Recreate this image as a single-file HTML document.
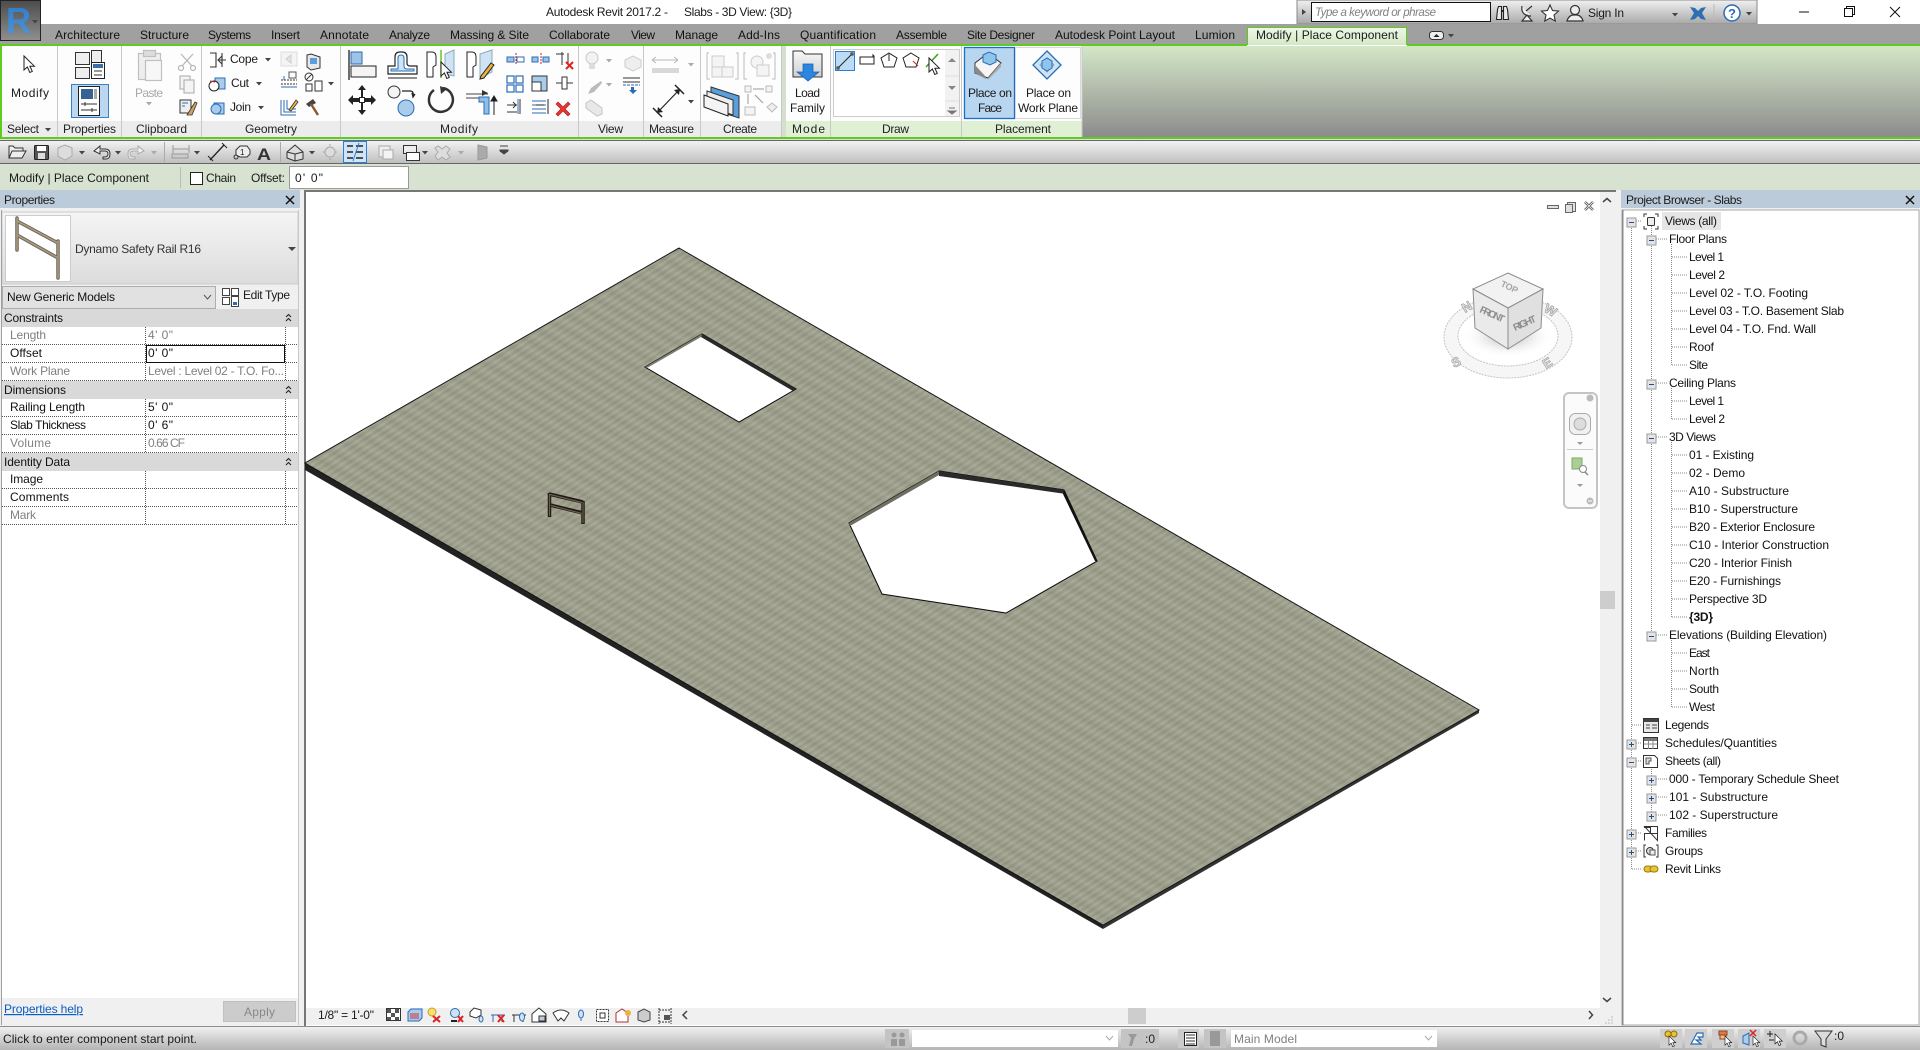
<!DOCTYPE html>
<html><head><meta charset="utf-8"><title>Autodesk Revit 2017.2 - Slabs - 3D View: {3D}</title>
<style>
html,body{margin:0;padding:0;width:1920px;height:1050px;overflow:hidden;background:#f0f0f0}
svg{display:block;font-family:"Liberation Sans",sans-serif;font-size:12px;fill:#1a1a1a}
.g{fill:#808080}
.lg{fill:#a8a8a8}
.dot{stroke:#8a8a8a;stroke-dasharray:1 1;fill:none}
.s{fill:none;stroke:#333;stroke-width:1.2}
.sg{fill:none;stroke:#b5b5b5;stroke-width:1.2}
.row{stroke:#555;stroke-dasharray:1 1;fill:none}
</style></head><body>
<svg width="1920" height="1050" viewBox="0 0 1920 1050" xmlns="http://www.w3.org/2000/svg">
<defs>
<linearGradient id="ctx" x1="0" y1="0" x2="0" y2="1"><stop offset="0" stop-color="#d3e7c7"/><stop offset="1" stop-color="#8c8c8c"/></linearGradient>
<linearGradient id="qat" x1="0" y1="0" x2="0" y2="1"><stop offset="0" stop-color="#f4f4f4"/><stop offset="1" stop-color="#bdbdbd"/></linearGradient>
<linearGradient id="st" x1="0" y1="0" x2="0" y2="1"><stop offset="0" stop-color="#f2f2f2"/><stop offset="1" stop-color="#b4b4b4"/></linearGradient>
<linearGradient id="ic" x1="0" y1="0" x2="0" y2="1"><stop offset="0" stop-color="#f0f0f0"/><stop offset="1" stop-color="#a8a8a8"/></linearGradient>
<linearGradient id="fo" x1="0" y1="0" x2="0" y2="1"><stop offset="0" stop-color="#f8f8f8"/><stop offset="1" stop-color="#cfcfcf"/></linearGradient>
<linearGradient id="ts" x1="0" y1="0" x2="0" y2="1"><stop offset="0" stop-color="#f5f5f5"/><stop offset="1" stop-color="#dcdcdc"/></linearGradient>
<linearGradient id="app" x1="0" y1="0" x2="0" y2="1"><stop offset="0" stop-color="#4c4c4c"/><stop offset="1" stop-color="#8f8f8f"/></linearGradient>
<linearGradient id="r" x1="0" y1="0" x2="0" y2="1"><stop offset="0" stop-color="#2f78c4"/><stop offset="1" stop-color="#4a9ade"/></linearGradient>
<linearGradient id="tab" x1="0" y1="0" x2="0" y2="1"><stop offset="0" stop-color="#eef8e6"/><stop offset="1" stop-color="#d3e8c6"/></linearGradient>
<linearGradient id="slab" gradientUnits="userSpaceOnUse" x1="0" y1="0" x2="-6.5" y2="12" spreadMethod="repeat"><stop offset="0" stop-color="#a6a894"/><stop offset=".5" stop-color="#989a86"/><stop offset="1" stop-color="#a6a894"/></linearGradient>
<linearGradient id="slab2" gradientUnits="userSpaceOnUse" x1="0" y1="0" x2="3" y2="4.500" spreadMethod="repeat"><stop offset="0" stop-color="#000" stop-opacity=".07"/><stop offset=".5" stop-color="#fff" stop-opacity=".07"/><stop offset="1" stop-color="#000" stop-opacity=".07"/></linearGradient>
<radialGradient id="shadow"><stop offset="0" stop-color="#aaa"/><stop offset="1" stop-color="#fff" stop-opacity="0"/></radialGradient>
<path id="ar" d="M0 0h6l-3 3.5z" fill="#444"/>
<path id="arg" d="M0 0h6l-3 3.5z" fill="#aaa"/>
<g id="minus"><rect x="-4.5" y="-4.5" width="9" height="9" fill="#e4e4e4" stroke="#9a9a9a"/><path d="M-2.5 0h5" stroke="#2a4a90"/></g>
<g id="plus"><rect x="-4.5" y="-4.5" width="9" height="9" fill="#e4e4e4" stroke="#9a9a9a"/><path d="M-2.5 0h5M0-2.5v5" stroke="#2a4a90"/></g>
<path id="cur" d="M0 0V14L3.4 11 5.8 16.5 8.3 15.4 5.9 10.2H10.4Z" fill="#fff" stroke="#222"/>
</defs>

<!-- background / title -->
<rect width="1920" height="1050" fill="#f0f0f0"/>
<rect width="1920" height="24" fill="#fff"/>
<text x="546" y="16" textLength="122">Autodesk Revit 2017.2 -</text>
<text x="684" y="16" textLength="108">Slabs - 3D View: {3D}</text>

<!-- infocenter -->
<rect x="1297" y="0" width="460" height="24" fill="url(#ic)" stroke="#8a8a8a"/>
<path d="M1302 9l4 3-4 3z" fill="#444"/>
<rect x="1311.500" y="2.500" width="179" height="19" fill="#fff" stroke="#111"/>
<text x="1315" y="16" textLength="121" font-style="italic" class="g" font-size="11.500">Type a keyword or phrase</text>
<g stroke="#222" fill="#e8e8e8" stroke-width="1.100"><path d="M1496.500 19.500l1-10 1-3h3v13zM1503.500 19.500v-13h3l1 3 1 10z"/><path d="M1501.500 11h2" stroke-width="2"/></g>
<g class="s"><path d="M1522 6c-1 6 2 10 9 10M1526 11l6-5M1522 21h10l-5-6z" fill="#eee"/></g>
<path d="M1550 5l2.500 5.500 6 .6-4.500 4 1.300 6-5.300-3-5.300 3 1.300-6-4.500-4 6-.6z" fill="#fff" stroke="#333" stroke-width="1.100"/>
<g class="s"><circle cx="1575" cy="10" r="4.500" fill="#eee"/><path d="M1567 21c1-4 4-6 6-6h4c2 0 5 2 6 6z" fill="#eee"/></g>
<text x="1588" y="17" textLength="36">Sign In</text>
<use href="#ar" x="1672" y="13"/>
<path d="M1690 7l5 1 3 3 3-3 5-1-4 6 4 7-5-1-3-3-3 3-5 1 4-7z" fill="#2d6fb0"/>
<path d="M1714 4v18" stroke="#bbb"/>
<circle cx="1732" cy="13" r="8" fill="#fff" stroke="#2a6db5" stroke-width="1.500"/>
<text x="1728" y="18" font-weight="bold" font-size="13" fill="#2a6db5">?</text>
<use href="#ar" x="1746" y="12"/>
<!-- window controls -->
<path d="M1799 12h10" stroke="#111"/>
<rect x="1844.500" y="8.500" width="8" height="8" fill="#fff" stroke="#111"/><path d="M1846.500 8.500v-2h8v8h-2" fill="none" stroke="#111"/>
<path d="M1890 7l10 10M1900 7l-10 10" stroke="#111"/>

<!-- tabs -->
<rect y="24" width="1920" height="21" fill="#a0a0a0"/>
<g fill="#111">
<text x="55" y="39" textLength="65">Architecture</text>
<text x="140" y="39" textLength="49">Structure</text>
<text x="208" y="39" textLength="43">Systems</text>
<text x="271" y="39" textLength="29">Insert</text>
<text x="320" y="39" textLength="49">Annotate</text>
<text x="389" y="39" textLength="41">Analyze</text>
<text x="450" y="39" textLength="79">Massing &amp; Site</text>
<text x="549" y="39" textLength="61">Collaborate</text>
<text x="631" y="39" textLength="24">View</text>
<text x="675" y="39" textLength="43">Manage</text>
<text x="738" y="39" textLength="42">Add-Ins</text>
<text x="800" y="39" textLength="76">Quantification</text>
<text x="896" y="39" textLength="51">Assemble</text>
<text x="967" y="39" textLength="68">Site Designer</text>
<text x="1055" y="39" textLength="120">Autodesk Point Layout</text>
<text x="1195" y="39" textLength="40">Lumion</text>
</g>
<path d="M1247.500 45V27.500h159V45" fill="url(#tab)" stroke="#5ecb1e"/>
<text x="1256" y="39" textLength="142">Modify | Place Component</text>
<rect x="1429.500" y="31.500" width="14" height="8" rx="3" fill="#eee" stroke="#333"/><path d="M1433.500 37l3-3 3 3z" fill="#222"/>
<use href="#ar" x="1448" y="34" fill="#222"/>

<!-- app button -->
<rect x=".5" y=".5" width="40" height="40" fill="url(#app)" stroke="#222"/>
<text x="6" y="33" font-size="36" font-weight="bold" fill="url(#r)" textLength="25" lengthAdjust="spacingAndGlyphs">R</text>
<use href="#ar" x="32" y="20" fill="#222"/>

<!-- ribbon -->
<rect y="45" width="1920" height="94" fill="#fdfdfd"/>
<rect x="1082" y="46" width="838" height="91" fill="url(#ctx)"/>
<rect x="782" y="46" width="4" height="91" fill="#d4dfcd"/>
<rect y="44" width="1247" height="2" fill="#5ecb1e"/><rect x="1407" y="44" width="513" height="2" fill="#5ecb1e"/>
<rect y="137" width="1920" height="2" fill="#5ecb1e"/>
<rect y="45" width="2" height="93" fill="#5ecb1e"/>
<!-- panel title bars -->
<rect x="2" y="121" width="780" height="16" fill="#ececec"/>
<rect x="786" y="121" width="296" height="16" fill="#dff0d5"/>
<g stroke="#c8c8c8"><path d="M57.500 46V137M121.500 46V137M201.500 46V137M340.500 46V137M578.500 46V137M643.500 46V137M700.500 46V137M781.500 46V137M830.500 46V137M961.500 46V137M1082 46V137"/></g>
<g fill="#222">
<text x="7" y="133" textLength="32">Select</text><use href="#ar" x="45" y="128"/>
<text x="63" y="133" textLength="53">Properties</text>
<text x="136" y="133" textLength="51">Clipboard</text>
<text x="245" y="133" textLength="52">Geometry</text>
<text x="440" y="133" textLength="38">Modify</text>
<text x="598" y="133" textLength="25">View</text>
<text x="649" y="133" textLength="45">Measure</text>
<text x="723" y="133" textLength="34">Create</text>
<text x="792" y="133" textLength="33">Mode</text>
<text x="882" y="133" textLength="27">Draw</text>
<text x="995" y="133" textLength="56">Placement</text>
</g>

<!-- Select -->
<use href="#cur" x="24" y="56"/>
<text x="11" y="97" textLength="38">Modify</text>
<!-- Properties -->
<g stroke="#333" fill="#eee"><rect x="75.500" y="52.500" width="14" height="12"/><rect x="91.500" y="50.500" width="10" height="14"/><rect x="75.500" y="67.500" width="14" height="11"/></g>
<rect x="91.500" y="62.500" width="13" height="16" fill="#fff" stroke="#222"/><rect x="93" y="64" width="10" height="4" fill="#3a6ea5"/><path d="M94 71h8M94 75h8" stroke="#333"/>
<rect x="71.500" y="84.500" width="37" height="33" fill="#bcd8f0" stroke="#3a7fc4"/>
<rect x="78.500" y="86.500" width="21" height="29" fill="#fff" stroke="#222"/><rect x="81" y="89" width="12" height="10" fill="#34648f"/><rect x="94" y="89" width="3" height="10" fill="#aaa"/><path d="M81 104h16M85 102v4M81 110h16M92 108v4" stroke="#333"/>
<!-- Clipboard -->
<g class="sg" fill="#eee"><rect x="138.500" y="53.500" width="22" height="26" fill="#eee" stroke="#c0c0c0"/><rect x="143.500" y="50.500" width="12" height="6" fill="#ddd" stroke="#c0c0c0"/><rect x="145.500" y="60.500" width="16" height="20" fill="#f7f7f7" stroke="#c0c0c0"/></g>
<text x="135" y="97" textLength="28" class="lg">Paste</text>
<use href="#arg" x="146" y="102"/>
<g class="sg"><path d="M181 54l11 12M193 54l-11 12"/><circle cx="181" cy="68" r="2.500"/><circle cx="193" cy="68" r="2.500"/></g>
<g class="sg"><rect x="180" y="76" width="10" height="13" fill="#f4f4f4"/><rect x="184" y="80" width="10" height="13" fill="#f4f4f4"/></g>
<rect x="180" y="100" width="11" height="13" fill="#eee" stroke="#333"/><path d="M182 103h6M182 106h3" stroke="#2a6db5"/><path d="M187 115l8-13 2 1-5 12z" fill="#cfa060" stroke="#333" stroke-width=".8"/>
<!-- Geometry -->
<g class="s"><path d="M210 53h6v14h-6M222 53v14M218 60h8M222 56l-4 4 4 4" stroke-width="1.100"/></g>
<text x="230" y="63" textLength="28">Cope</text><use href="#ar" x="265" y="58"/>
<rect x="215" y="78" width="10" height="11" fill="#a9cbec" stroke="#2a6db5"/><circle cx="214" cy="86" r="5" fill="#fff" stroke="#222"/><path d="M210 81l5 1" stroke="#c22" />
<text x="231" y="87" textLength="18">Cut</text><use href="#ar" x="256" y="82"/>
<path d="M214 103h10v11h-7l-3-3z" fill="#a9cbec" stroke="#2a6db5"/><circle cx="216" cy="109" r="5" fill="#a9cbec" stroke="#2a6db5"/>
<text x="230" y="111" textLength="21">Join</text><use href="#ar" x="258" y="106"/>
<rect x="281" y="52" width="16" height="14" fill="#f4f4f4" stroke="#ddd"/><path d="M291 55l-5 4 5 4z" fill="#e4e4e4" stroke="#ccc"/>
<path d="M307 55l4-1 9 3v11l-9 2-4-3z" fill="#e8e8e8" stroke="#333"/><rect x="310" y="58" width="7" height="6" fill="#5a9fdc"/>
<path d="M281 80h16M281 84h16" stroke="#333" stroke-dasharray="2 1"/><path d="M284 76v4" stroke="#2a6db5"/><rect x="289" y="72" width="7" height="6" fill="none" stroke="#555"/><path d="M281 87h16" stroke="#2a6db5"/>
<circle cx="309" cy="77" r="4" fill="none" stroke="#333"/><path d="M306 80l6-6" stroke="#333"/><rect x="306" y="84" width="6" height="7" fill="#fff" stroke="#333"/><rect x="315" y="81" width="7" height="10" fill="#fff" stroke="#333"/><use href="#ar" x="328" y="82"/>
<path d="M281 100v15h15M284 100v12h12M287 100v9h9" stroke="#2a6db5" fill="none"/><path d="M289 110l7-10 2 2-7 9z" fill="#f0b040" stroke="#333" stroke-width=".8"/>
<path d="M306 104l7-5 3 4-7 4z" fill="#444"/><path d="M311 104l7 11" stroke="#8a5a30" stroke-width="2.500"/>
<!-- Modify tools -->
<g stroke="#222"><path d="M349 50v30" stroke-width="1.300"/><rect x="351" y="52" width="11" height="12" fill="#9cc4e8" stroke="#2a6db5"/><rect x="351" y="66" width="25" height="11" fill="#f4f4f4"/></g>
<path d="M388 74v-8h7v-9q0-5 5-5h2q5 0 5 5v6q0 3 3 3h7v8z" fill="#fff" stroke="#222" stroke-width="1.200"/><path d="M391 71v-2h7v-11q0-3 3-3t3 3v8q0 3 3 3h7v2z" fill="#cfe3f5" stroke="#2a6db5"/><path d="M388 78h29" stroke="#222"/>
<path d="M427 52h5q4 0 4 5v8l-3 2v10h-6z" fill="#fff" stroke="#222"/><path d="M441 50v28" stroke="#5ecb1e" stroke-width="1.500"/><path d="M445 54l9-4v26l-9-2z" fill="#cfe3f5" stroke="#8ab"/><use href="#cur" x="441" y="62"/>
<path d="M467 52h5q4 0 4 5v8l-3 2v10h-6z" fill="#fff" stroke="#222"/><path d="M480 54l12-4v22l-12 6z" fill="#cfe3f5" stroke="#8ab"/><path d="M481 76l10-13 3 2-10 13-4 1z" fill="#f0b040" stroke="#222"/>
<g fill="#fff" stroke="#222"><path d="M362 85l-4 5h3v8h-8v-3l-5 5 5 5v-3h8v8h-3l4 5 4-5h-3v-8h8v3l5-5-5-5v3h-8v-8h3z" fill="#222" stroke="none"/><rect x="359.500" y="97.500" width="5" height="5" fill="#fff"/></g>
<circle cx="394" cy="92" r="6" fill="#f4f4f4" stroke="#333"/><circle cx="406" cy="108" r="8" fill="#a9cbec" stroke="#2a6db5"/><path d="M402 91h8q4 0 3 5M412 93l1 4 2-3" fill="none" stroke="#222" stroke-width="1.300"/>
<path d="M443 88a12 12 0 1 1-9 2" fill="none" stroke="#333" stroke-width="2.500"/><path d="M440 86l7 3-6 5z" fill="#333"/>
<path d="M466 94h22M466 98h18" stroke="#444"/><path d="M482 90l6 3-6 3z" fill="#333"/><path d="M484 97h5v17h-5v-12h-5v-5z" fill="#8fbfe8" stroke="#2a6db5"/><path d="M494 115V98M494 96l-3 5h6z" stroke="#222"/>
<g fill="#9cc4e8" stroke="#2a6db5"><rect x="507" y="57" width="7" height="5"/><rect x="517" y="57" width="7" height="5" fill="#fff"/><rect x="532" y="57" width="6" height="5"/><rect x="543" y="57" width="6" height="5"/></g>
<path d="M516 53v12M541 53v12" stroke="#c22" stroke-dasharray="2 1"/>
<path d="M556 54h8M562 52v13M568 53v10" stroke="#333" fill="none"/><path d="M566 62l7 7M573 62l-7 7" stroke="#d22" stroke-width="2"/>
<g fill="#fff" stroke="#2a6db5" stroke-width="1.200"><rect x="507" y="76" width="7" height="7"/><rect x="516" y="76" width="7" height="7"/><rect x="507" y="85" width="7" height="7"/><rect x="516" y="85" width="7" height="7"/></g>
<rect x="532" y="76" width="15" height="15" fill="#a9cbec" stroke="#333"/><rect x="532" y="82" width="9" height="9" fill="#fff" stroke="#333"/>
<path d="M556 83h6M562 77v12h5v-12zM573 83h-6" fill="#fff" stroke="#333"/>
<path d="M507 105h10M513 102l3 3-3 3M507 112h10M520 99v15" fill="none" stroke="#333"/><path d="M518 99v15" stroke="#2a6db5"/>
<path d="M532 101h14M532 105h14M532 109h14M532 113h14" stroke="#2a6db5"/><path d="M548 99v15M536 105h8" stroke="#222"/>
<path d="M558 102l5 5 5-5 2 2-5 5 5 5-2 2-5-5-5 5-2-2 5-5-5-5z" fill="#e33" stroke="#a11" stroke-width=".6"/>
<!-- View -->
<circle cx="592" cy="58" r="6" fill="#f2f2f2" stroke="#c8c8c8"/><rect x="589" y="64" width="6" height="5" fill="#ddd"/><use href="#arg" x="606" y="59"/>
<path d="M625 60l8-4 8 4v7l-8 4-8-4z" fill="#eee" stroke="#ccc"/>
<path d="M588 94l3-6 10-7 1 2-8 9z" fill="#bbb"/><use href="#arg" x="606" y="83"/>
<path d="M623 78h17M623 82h17" stroke="#333"/><path d="M623 85h17" stroke="#2a6db5" stroke-dasharray="3 1"/><path d="M631 87h3v3h3l-4 4-4-4h2z" fill="#2a6db5"/>
<path d="M586 103l5-3 11 8v6l-5 2-11-8z" fill="#e8e8e8" stroke="#c4c4c4"/>
<!-- Measure -->
<path d="M652 60h26M652 60l4-3M652 60l4 3M678 60l-4-3M678 60l-4 3" stroke="#b8b8b8" fill="none"/><rect x="652" y="68" width="27" height="5" fill="#d8d8d8"/>
<use href="#arg" x="688" y="63"/>
<path d="M657 113l23-24" stroke="#222" stroke-width="1.200"/><path d="M653 108l9 9M675 85l9 9" stroke="#222" stroke-width="1.500"/><path d="M657 113l6-1-5-5zM680 89l-6 1 5 5z" fill="#222"/>
<use href="#ar" x="688" y="100"/>
<!-- Create -->
<path d="M709 53h-2v26h3M736 53h2v26h-3" stroke="#bbb" fill="none"/><g fill="#f4f4f4" stroke="#ccc"><rect x="712" y="56" width="12" height="11"/><rect x="712" y="67" width="10" height="10"/><rect x="722" y="67" width="11" height="10"/></g>
<path d="M746 53h-2v26h3M773 53h2v26h-3" stroke="#bbb" fill="none"/><circle cx="757" cy="62" r="6" fill="#f4f4f4" stroke="#ccc"/><rect x="757" y="65" width="12" height="11" fill="#f4f4f4" stroke="#ccc"/><circle cx="769" cy="56" r="3" fill="#ddd"/>
<path d="M711 87l28 9v22l-28-9z" fill="#5a9fdc" stroke="#333"/><path d="M707 91l26 9v15l-26-9z" fill="#eee" stroke="#333"/><path d="M704 95l24 9v12l-24-9z" fill="#f4f4f4" stroke="#222"/>
<g fill="#f4f4f4" stroke="#bbb"><rect x="745" y="86" width="6" height="6"/><rect x="766" y="86" width="6" height="6"/><rect x="745" y="107" width="10" height="8"/></g><path d="M753 89h11M748 94v10M755 95l8 8" stroke="#999"/><path d="M767 107l5-4 5 4-5 5z" fill="#eee" stroke="#bbb"/>
<!-- Mode -->
<path d="M793 77V51h9l3 3h17v23z" fill="url(#fo)" stroke="#333"/><path d="M803 64h10v8h6l-11 9-11-9h6z" fill="#2a86e0" stroke="#1a5fa8" stroke-width=".7"/>
<text x="795" y="97" textLength="25">Load</text><text x="790" y="112" textLength="35">Family</text>
<!-- Draw -->
<rect x="833.500" y="49.500" width="126" height="67" fill="#fff" stroke="#ccc"/>
<rect x="835.500" y="51.500" width="19" height="19" fill="#bcdcf5" stroke="#2a7fd0"/><path d="M838 68l14-14" stroke="#222"/><rect x="837" y="67" width="2" height="2" fill="#fff" stroke="#222"/><rect x="851" y="53" width="2" height="2" fill="#fff" stroke="#222"/>
<path d="M860 57h13v-2l1 1v8h-14z" fill="#fff" stroke="#222"/>
<path d="M889 53l8 5-3 9h-10l-3-9z" fill="#fff" stroke="#222"/><path d="M889 61v-7" stroke="#222"/>
<path d="M911 53l8 5-3 9h-10l-3-9z" fill="#fff" stroke="#222"/><path d="M913 61l5 5" stroke="#d22"/>
<path d="M926 67l12-13" stroke="#3aa020" stroke-width="1.500"/><use href="#cur" x="932" y="58" transform="translate(-3 0)"/>
<rect x="945" y="50" width="14" height="66" fill="#f2f2f2"/><path d="M948 62l4-4 4 4z" fill="#888"/><path d="M948 86l4 4 4-4z" fill="#888"/><path d="M949 108h6M948 111l4 3 4-3z" stroke="#777" fill="#777"/><path d="M945 101h14M945 76h14" stroke="#ddd"/>
<!-- Placement -->
<rect x="964.500" y="47.500" width="50" height="71" fill="#b8d6f0" stroke="#1a6fc4" stroke-width="1.300"/>
<rect x="1015.500" y="47.500" width="65" height="71" fill="#fdfdfd" stroke="#d8d8d8"/>
<path d="M975 73V63l13-10 13 10-13 15z" fill="#f5f5f5" stroke="#333"/><path d="M975 65l11 12v2l-11-6z" fill="#888"/><path d="M1001 63v4l-13 13v-2z" fill="#aaa"/><path d="M983 55l6-3 7 3v7l-6 3-7-3z" fill="#8fc4ec" stroke="#2a6db5"/>
<path d="M1047 51l14 14-14 14-14-14z" fill="#cfe3f5" stroke="#2a6db5" stroke-width="1.300"/><path d="M1040 65l7-7 7 7-7 7z" fill="none" stroke="#7aa8d8"/><path d="M1042 61l5-3 5 3v7l-5 3-5-3z" fill="#8fc4ec" stroke="#2a6db5"/>
<text x="968" y="97" textLength="44">Place on</text><text x="978" y="112" textLength="24">Face</text>
<text x="1026" y="97" textLength="45">Place on</text><text x="1018" y="112" textLength="60">Work Plane</text>

<!-- QAT -->
<rect y="139" width="1920" height="1" fill="#e0e0e0"/>
<rect y="140" width="1920" height="24" fill="url(#qat)"/>
<path d="M0 140.500H1920M0 163.500H1920" stroke="#666"/>
<path d="M9 158v-12h4l2 2h8v3M9 158l3-7h14l-4 7z" fill="#eee" stroke="#333"/>
<rect x="34.500" y="145.500" width="14" height="14" rx="1" fill="#555" stroke="#222"/><rect x="37" y="146" width="9" height="5" fill="#fff"/><rect x="38" y="153" width="7" height="6" fill="#ddd"/>
<path d="M58 148l7-3 7 3v8l-7 4-7-4z" fill="#ddd" stroke="#aaa"/><use href="#ar" x="79" y="151"/>
<path d="M94 151l6-5v3h5q5 0 5 5t-4 5h-3v-2h2q3 0 3-3t-3-3h-5v3z" fill="#eee" stroke="#333"/><use href="#ar" x="115" y="151"/>
<path d="M144 151l-6-5v3h-5q-5 0-5 5t4 5h3v-2h-2q-3 0-3-3t3-3h5v3z" fill="#f2f2f2" stroke="#aaa"/><use href="#arg" x="151" y="151"/>
<path d="M164.500 142v20" stroke="#aaa"/>
<path d="M173 149h16M173 145v8M189 145v8" stroke="#999" fill="none"/><rect x="172" y="154" width="16" height="4" fill="#ccc" stroke="#999"/><use href="#ar" x="194" y="151"/>
<path d="M210 160l14-15" stroke="#222" stroke-width="1.300"/><path d="M208 156l5 5M222 143l5 5" stroke="#222"/>
<circle cx="236" cy="157" r="2" fill="none" stroke="#333"/><path d="M236 155v-5l4-4h7l3 4v4l-3 3h-7z" fill="#eee" stroke="#333"/><text x="240" y="155" font-size="8">1</text>
<text x="257" y="160" font-size="17" font-weight="bold" fill="#333" textLength="14" lengthAdjust="spacingAndGlyphs">A</text>
<path d="M280.500 142v20" stroke="#aaa"/>
<path d="M287 152l8-7 8 7v7l-8 2-8-3z" fill="#ddd" stroke="#333"/><path d="M295 154v7M287 152l8 2 8-2" stroke="#333" fill="none"/><use href="#ar" x="309" y="151"/>
<path d="M325 152a5 5 0 0 1 10 0 5 5 0 0 1-10 0z" fill="#ddd" stroke="#aaa"/><path d="M323 152h2M335 152h2M330 146v-2M330 158v2" stroke="#aaa"/>
<rect x="343.500" y="141.500" width="23" height="21" fill="#cfe4f7" stroke="#2a7fd0"/><path d="M347 146h6M347 152h6M347 158h6M356 146h7M356 152h7M356 158h7" stroke="#222" stroke-width="1.500"/><path d="M353 161l6-18" stroke="#2a7fd0"/>
<rect x="379" y="146" width="11" height="11" fill="#eee" stroke="#aaa"/><rect x="383" y="150" width="10" height="9" fill="#f4f4f4" stroke="#aaa"/>
<rect x="403.500" y="145.500" width="13" height="8" fill="#eee" stroke="#333"/><rect x="406.500" y="152.500" width="13" height="8" fill="#fff" stroke="#333"/><use href="#ar" x="422" y="151"/>
<path d="M438 146l4 3 4-3 4 3-3 4 3 4-4 3-4-3-4 3-3-4 3-4-3-4z" fill="#ddd" stroke="#aaa"/><use href="#arg" x="458" y="151"/>
<path d="M478 145l9 2v11l-9 2z" fill="#aaa" stroke="#999"/>
<path d="M500 146h8M500 150h8v1l-4 3-4-3z" stroke="#444" fill="#444"/>

<!-- Options bar -->
<rect y="164" width="1920" height="26" fill="#d8e2d1"/>
<text x="9" y="182" textLength="140">Modify | Place Component</text>
<path d="M180.500 167v21" stroke="#bbb"/>
<rect x="190.500" y="172.500" width="12" height="12" fill="#fff" stroke="#222"/>
<text x="206" y="182" textLength="30">Chain</text>
<text x="251" y="182" textLength="34">Offset:</text>
<rect x="289.500" y="166.500" width="119" height="22" fill="#fff" stroke="#9a9a9a"/>
<text x="295" y="182" textLength="28">0'  0"</text>

<!-- Panels -->
<rect y="190" width="1920" height="836" fill="#f0f0f0"/>
<rect y="190" width="300" height="18" fill="#bccbd9"/>
<text x="4" y="204" textLength="51">Properties</text>
<path d="M286 196l8 8M294 196l-8 8" stroke="#111" stroke-width="1.500"/>
<rect x="1" y="210" width="297" height="815" fill="#f0f0f0"/>
<rect x="2" y="212" width="296" height="72" fill="url(#ts)" stroke="#ccc"/>
<rect x="5.500" y="215.500" width="65" height="66" fill="#fff" stroke="#ccc"/>
<g fill="none" stroke-linecap="round"><g stroke="#6f6353" stroke-width="3.500"><path d="M17 218v32M58 241v37M17 221l41 22M17 235l41 23"/></g><g stroke="#a89a82" stroke-width="1.600"><path d="M17 218v32M58 241v37M17 221l41 22M17 235l41 23"/></g></g>
<text x="75" y="253" textLength="126" fill="#333">Dynamo Safety Rail R16</text>
<path d="M288 247h8l-4 4z" fill="#444"/>
<rect x="2.500" y="286.500" width="213" height="22" fill="#e1e1e1" stroke="#adadad"/>
<text x="7" y="301" textLength="108" fill="#111">New Generic Models</text>
<path d="M204 295l3.500 4 3.500-4" fill="none" stroke="#555"/>
<g stroke="#444" fill="#fff"><rect x="222.500" y="288.500" width="7" height="7"/><rect x="231.500" y="288.500" width="7" height="7"/><rect x="222.500" y="297.500" width="7" height="7"/><rect x="231.500" y="296.500" width="7" height="10"/></g>
<rect x="233" y="302" width="4" height="3" fill="#2a6db5"/>
<text x="243" y="299" textLength="47">Edit Type</text>
<!-- table -->
<rect x="2" y="309" width="296" height="216" fill="#fff"/>
<g fill="#d9d9d9"><rect x="2" y="309" width="296" height="18"/><rect x="2" y="381" width="296" height="18"/><rect x="2" y="453" width="296" height="18"/></g>
<g class="row"><path d="M2 344.500H298M2 362.500H298M2 380.500H298M2 416.500H298M2 434.500H298M2 452.500H298M2 488.500H298M2 506.500H298M2 524.500H298"/><path d="M145.500 327V381M145.500 399V453M145.500 471V525M285.500 327V381M285.500 399V453M285.500 471V525"/></g>
<rect x="146.500" y="345.500" width="138" height="17" fill="#fff" stroke="#111" stroke-width="1"/>
<g fill="#111">
<text x="4" y="322" textLength="59">Constraints</text>
<text x="4" y="394" textLength="62">Dimensions</text>
<text x="4" y="466" textLength="66">Identity Data</text>
<text x="10" y="357" textLength="32">Offset</text>
<text x="148" y="357" textLength="25">0'  0"</text>
<text x="10" y="411" textLength="75">Railing Length</text>
<text x="148" y="411" textLength="25">5'  0"</text>
<text x="10" y="429" textLength="76">Slab Thickness</text>
<text x="148" y="429" textLength="25">0'  6"</text>
<text x="10" y="483" textLength="33">Image</text>
<text x="10" y="501" textLength="59">Comments</text>
</g>
<g fill="#808080">
<text x="10" y="339" textLength="36">Length</text>
<text x="148" y="339" textLength="25">4'  0"</text>
<text x="10" y="375" textLength="60">Work Plane</text>
<text x="148" y="375" textLength="136">Level : Level 02 - T.O. Fo...</text>
<text x="10" y="447" textLength="41">Volume</text>
<text x="148" y="447" textLength="37">0.66 CF</text>
<text x="10" y="519" textLength="26">Mark</text>
</g>
<g fill="none" stroke="#222" stroke-width="1.100"><path d="M286 317l2.500-2.500 2.500 2.500M286 321l2.500-2.500 2.500 2.500M286 389l2.500-2.500 2.500 2.500M286 393l2.500-2.500 2.500 2.500M286 461l2.500-2.500 2.500 2.500M286 465l2.500-2.500 2.500 2.500"/></g>
<rect x="2" y="525" width="296" height="473" fill="#fff"/>
<path d="M1.500 210V1025" stroke="#a0a0a0"/><path d="M298.500 210V1025" stroke="#c8c8c8"/>
<text x="4" y="1013" textLength="79" fill="#0a5cc4" text-decoration="underline">Properties help</text>
<rect x="223.500" y="1001.500" width="72" height="20" fill="#cccccc" stroke="#c0c0c0"/>
<text x="244" y="1016" textLength="31" fill="#888">Apply</text>

<!-- Viewport -->
<rect x="304" y="190" width="1312" height="836" fill="#fff"/>
<rect x="304" y="190" width="1312" height="2" fill="#777"/>
<rect x="304" y="190" width="2" height="836" fill="#777"/>
<!-- slab -->
<path d="M305 463L305 470 1103 929 1103 925Z" fill="#222"/>
<path d="M1103 925L1103 929 1479 713 1479 710Z" fill="#333"/>
<path d="M679 248L1479 710 1103 925 305 463Z M702 334L645 367 739 422 796 389Z M939 471L849 523 882 594 1006 613 1097 561 1064 490Z" fill="url(#slab)" fill-rule="evenodd" stroke="#111" stroke-width="1"/>
<path d="M679 248L1479 710 1103 925 305 463Z" fill="url(#slab2)"/>
<path d="M702 334L645 367 739 422 796 389Z" fill="#fff" stroke="#111"/>
<path d="M939 471L849 523 882 594 1006 613 1097 561 1064 490Z" fill="#fff" stroke="#111"/>
<path d="M702 334L796 389 793 391 701 337Z" fill="#2a2a2a"/>
<path d="M702 334L645 367 647 368 701 337Z" fill="#7d7d70"/>
<path d="M939 471L1064 490 1066 494 939 476Z" fill="#2a2a2a"/>
<path d="M1064 490L1097 561 1095 561 1063 494Z" fill="#111"/>
<path d="M939 471L849 523 850 526 939 475Z" fill="#6f6f62"/>
<!-- rail -->
<g fill="none" stroke-width="3.500" stroke="#1f1a16"><path d="M549.500 493v24M583 501v23M549 494l34 8M550 505l33 8"/></g>
<g fill="none" stroke-width="1.200" stroke="#6a5d4e"><path d="M549.500 494v22M583 502v21M550 494.500l32 8M551 505.500l31 8"/></g>

<!-- viewport controls -->
<g fill="#e0e0e0" stroke="#666"><rect x="1547.500" y="205.500" width="11" height="3"/><rect x="1567.500" y="202.500" width="8" height="9"/><rect x="1565.500" y="204.500" width="7" height="8"/></g>
<path d="M1585 202l8 8M1593 202l-8 8" stroke="#444" stroke-width="2.400"/><path d="M1585 202l8 8M1593 202l-8 8" stroke="#e8e8e8"/>
<!-- viewcube -->
<ellipse cx="1508" cy="337" rx="64" ry="41" fill="#f6f6f6" stroke="#c4c4c4" stroke-dasharray="2 1"/>
<ellipse cx="1508" cy="336" rx="50" ry="30" fill="#fff" stroke="#c4c4c4" stroke-dasharray="2 1"/>
<ellipse cx="1508" cy="336" rx="45" ry="22" fill="url(#shadow)"/>
<path d="M1508 273L1543 289 1508 308 1473 289Z" fill="#f2f2f2" stroke="#8c8c8c"/>
<path d="M1473 289L1508 308 1508 349 1475 328Z" fill="#eaeaea" stroke="#8c8c8c"/>
<path d="M1543 289L1508 308 1508 349 1541 328Z" fill="#e0e0e0" stroke="#8c8c8c"/>
<text font-size="9" font-weight="bold" fill="#a5a5a5" transform="translate(1500 286) rotate(25)" textLength="18">TOP</text>
<text font-size="10" font-weight="bold" fill="#8e8e8e" transform="translate(1479 312) rotate(24)" textLength="26">FRONT</text>
<text font-size="10" font-weight="bold" fill="#8e8e8e" transform="translate(1515 331) rotate(-24)" textLength="24">RIGHT</text>
<g font-size="13" font-weight="bold" fill="#e8e8e8" stroke="#a8a8a8" stroke-width=".8">
<text transform="translate(1465 313) rotate(-30)">N</text>
<text transform="translate(1543 311) rotate(30)">W</text>
<text transform="translate(1454 368) rotate(-25)">S</text>
<text transform="translate(1546 369) rotate(-32)">E</text>
</g>
<!-- nav bar -->
<rect x="1564" y="393" width="33" height="115" rx="5" fill="#fbfbfb" stroke="#c4c4c4" stroke-width="2"/>
<circle cx="1590" cy="398" r="3.500" fill="#bbb"/>
<circle cx="1590" cy="501" r="3.500" fill="#bbb"/><path d="M1588 501h4" stroke="#fff"/>
<rect x="1569.500" y="413.500" width="21" height="21" rx="6" fill="#f0f0f0" stroke="#aaa"/><circle cx="1580" cy="424" r="6" fill="#ddd" stroke="#aaa"/>
<path d="M1577 442h6l-3 3z" fill="#999"/>
<path d="M1567 449.500h26" stroke="#ccc"/>
<rect x="1572" y="458" width="10" height="11" fill="#a9cf94" stroke="#7fa86a"/><circle cx="1583" cy="469" r="3.500" fill="#fff" stroke="#888"/><path d="M1585 472l3 3" stroke="#888" stroke-width="1.500"/>
<path d="M1577 484h6l-3 3z" fill="#999"/>
<!-- scrollbars -->
<rect x="1600" y="192" width="16" height="834" fill="#f0f0f0"/>
<rect x="306" y="1008" width="1310" height="17" fill="#f0f0f0"/>
<rect x="1600" y="591" width="15" height="18" fill="#cdcdcd"/>
<rect x="1128" y="1008" width="18" height="16" fill="#cdcdcd"/>
<path d="M1603 202l4-3.500 4 3.500M1603 998l4 3.500 4-3.500M1589 1011l3.500 4-3.500 4" fill="none" stroke="#444" stroke-width="1.500"/>
<path d="M1611 1017h2M1608 1020h2M1611 1020h2M1605 1023h2M1608 1023h2M1611 1023h2" stroke="#bbb"/>
<!-- view control bar -->
<text x="318" y="1019" textLength="56">1/8" = 1'-0"</text>
<g transform="translate(0 -1)">
<rect x="386.500" y="1009.500" width="14" height="12" fill="#fff" stroke="#333"/><path d="M387 1010h4v4h-4zM395 1010h4v4h-4zM391 1014h4v4h-4zM387 1018h4v3h-4zM395 1018h4v3h-4z" fill="#555"/>
<path d="M408 1013l3-3h11v9l-3 3h-11z" fill="#a9cbec" stroke="#2a6db5"/><path d="M410 1015h9M410 1017h9M410 1019h9" stroke="#c33"/>
<circle cx="432" cy="1013" r="4" fill="#f8e070" stroke="#c8a020"/><path d="M433 1017l7 6M440 1017l-7 6" stroke="#d22" stroke-width="2"/>
<circle cx="455" cy="1014" r="4.500" fill="#cfe3f5" stroke="#2a6db5"/><path d="M451 1022h6" stroke="#222" stroke-width="2"/><path d="M458 1017l5 6M463 1017l-5 6" stroke="#d22" stroke-width="2"/>
<path d="M470 1013l4-4 7 2v5l-5 3-6-2z" fill="#fff" stroke="#333"/><ellipse cx="481" cy="1020" rx="2" ry="3" fill="#cfe3f5" stroke="#2a6db5"/>
<path d="M491 1016h14M493 1016v7M502 1016v7" stroke="#2a6db5"/><path d="M498 1016l6 7M504 1016l-6 7" stroke="#d22" stroke-width="2"/>
<path d="M512 1016h14M514 1016v7M523 1016v7" stroke="#333"/><ellipse cx="522" cy="1018" rx="2.500" ry="4" fill="#cfe3f5" stroke="#2a6db5"/>
<path d="M532 1015l7-6 7 6v8h-14z" fill="#fff" stroke="#333"/><rect x="539" y="1017" width="6" height="5" fill="#bcd" stroke="#333"/>
<path d="M553 1014q8-6 16 0l-5 8-3-3-3 3z" fill="#fff" stroke="#333"/>
<ellipse cx="581" cy="1015" rx="2.500" ry="4" fill="#cfe3f5" stroke="#2a6db5"/><path d="M581 1019v3" stroke="#2a6db5"/>
<rect x="596.500" y="1010.500" width="12" height="12" fill="#fff" stroke="#333" stroke-dasharray="2 1"/><rect x="600" y="1014" width="5" height="5" fill="none" stroke="#333"/>
<path d="M616 1014l6-4 6 4v9h-12z" fill="#fff" stroke="#a33"/><circle cx="628" cy="1014" r="3" fill="#f0b040"/>
<path d="M638 1013l6-3 6 3v8l-6 2-6-2z" fill="#ccc" stroke="#444"/>
<path d="M659 1011h12M659 1023h12M659 1009v16M671 1009v16" stroke="#333" stroke-dasharray="2 1" fill="none"/><rect x="664" y="1016" width="6" height="5" fill="#555"/>
<path d="M687 1012l-4 4 4 4" fill="none" stroke="#444" stroke-width="1.500"/>
</g>

<!-- Project browser -->
<rect x="1621" y="190" width="299" height="18" fill="#bccbd9"/>
<text x="1626" y="204" textLength="116">Project Browser - Slabs</text>
<path d="M1906 196l8 8M1914 196l-8 8" stroke="#111" stroke-width="1.500"/>
<rect x="1622" y="210" width="297" height="815" fill="#fff" stroke="#a8a8a8"/>
<rect x="1622" y="210" width="1.500" height="815" fill="#8a8a8a"/>
<rect x="1662" y="212" width="59" height="18" fill="#e5e5e5"/>
<!-- tree lines -->
<g class="dot">
<path d="M1631.500 226V869M1651.500 226V636M1651.500 767V816"/>
<path d="M1671.500 244V365M1671.500 388V419M1671.500 442V617M1671.500 640V707"/>
<path d="M1672 257h15M1672 275h15M1672 293h15M1672 311h15M1672 329h15M1672 347h15M1672 365h15M1672 401h15M1672 419h15M1672 455h15M1672 473h15M1672 491h15M1672 509h15M1672 527h15M1672 545h15M1672 563h15M1672 581h15M1672 599h15M1672 617h15M1672 653h15M1672 671h15M1672 689h15M1672 707h15"/>
<path d="M1656 239h11M1656 383h11M1656 437h11M1656 635h11M1656 779h11M1656 797h11M1656 815h11"/>
<path d="M1636 221h6M1632 725h10M1636 743h6M1636 761h6M1636 833h6M1636 851h6M1632 869h10"/>
</g>
<use href="#minus" x="1631.500" y="222.500"/>
<use href="#minus" x="1651.500" y="240.500"/>
<use href="#minus" x="1651.500" y="384.500"/>
<use href="#minus" x="1651.500" y="438.500"/>
<use href="#minus" x="1651.500" y="636.500"/>
<use href="#plus" x="1631.500" y="744.500"/>
<use href="#minus" x="1631.500" y="762.500"/>
<use href="#plus" x="1651.500" y="780.500"/>
<use href="#plus" x="1651.500" y="798.500"/>
<use href="#plus" x="1651.500" y="816.500"/>
<use href="#plus" x="1631.500" y="834.500"/>
<use href="#plus" x="1631.500" y="852.500"/>
<!-- tree icons -->
<path d="M1644 217v-3h3M1655 214h3v3M1658 226v3h-3M1647 229h-3v-3" fill="none" stroke="#333"/><rect x="1647.500" y="217.500" width="7" height="8" rx="1" fill="#eee" stroke="#333"/>
<rect x="1643.500" y="718.500" width="15" height="14" fill="#e8e8e8" stroke="#333"/><rect x="1644" y="719" width="14" height="3" fill="#444"/><path d="M1646 725h4M1652 725h5M1646 728h4M1652 728h5" stroke="#444"/>
<rect x="1643.500" y="737.500" width="14" height="11" fill="#fff" stroke="#333"/><rect x="1644" y="738" width="13" height="3" fill="#777"/><path d="M1644 744h13M1648.500 741v8M1653 741v8" stroke="#888"/>
<path d="M1643.500 755.500h11l3 3v9h-14z" fill="#fff" stroke="#333"/><path d="M1646 764v-6h5v3h-2v3z" fill="#ddd" stroke="#555"/>
<path d="M1644.500 840.500v-7h6v-6h-6v-1M1644.500 826.500h13v14z" fill="#fff" stroke="#333"/><path d="M1650.500 826.500v7h7" fill="none" stroke="#333"/>
<path d="M1646 845h-2v12h2M1656 845h2v12h-2" fill="none" stroke="#333"/><circle cx="1650" cy="851" r="3.500" fill="#ddd" stroke="#333"/><rect x="1650" y="850" width="5" height="5" fill="#eee" stroke="#555"/>
<g fill="#e8c230" stroke="#9a7a10"><rect x="1644" y="866" width="8" height="6" rx="3"/><rect x="1650" y="866" width="8" height="6" rx="3"/></g>
<!-- tree text -->
<g fill="#111">
<text x="1665" y="225" textLength="52">Views (all)</text>
<text x="1669" y="243" textLength="58">Floor Plans</text>
<text x="1689" y="261" textLength="35">Level 1</text>
<text x="1689" y="279" textLength="36">Level 2</text>
<text x="1689" y="297" textLength="119">Level 02 - T.O. Footing</text>
<text x="1689" y="315" textLength="155">Level 03 - T.O. Basement Slab</text>
<text x="1689" y="333" textLength="127">Level 04 - T.O. Fnd. Wall</text>
<text x="1689" y="351" textLength="25">Roof</text>
<text x="1689" y="369" textLength="19">Site</text>
<text x="1669" y="387" textLength="67">Ceiling Plans</text>
<text x="1689" y="405" textLength="35">Level 1</text>
<text x="1689" y="423" textLength="36">Level 2</text>
<text x="1669" y="441" textLength="47">3D Views</text>
<text x="1689" y="459" textLength="65">01 - Existing</text>
<text x="1689" y="477" textLength="56">02 - Demo</text>
<text x="1689" y="495" textLength="100">A10 - Substructure</text>
<text x="1689" y="513" textLength="109">B10 - Superstructure</text>
<text x="1689" y="531" textLength="126">B20 - Exterior Enclosure</text>
<text x="1689" y="549" textLength="140">C10 - Interior Construction</text>
<text x="1689" y="567" textLength="103">C20 - Interior Finish</text>
<text x="1689" y="585" textLength="92">E20 - Furnishings</text>
<text x="1689" y="603" textLength="78">Perspective 3D</text>
<text x="1689" y="621" textLength="24" font-weight="bold">{3D}</text>
<text x="1669" y="639" textLength="158">Elevations (Building Elevation)</text>
<text x="1689" y="657" textLength="21">East</text>
<text x="1689" y="675" textLength="30">North</text>
<text x="1689" y="693" textLength="30">South</text>
<text x="1689" y="711" textLength="26">West</text>
<text x="1665" y="729" textLength="44">Legends</text>
<text x="1665" y="747" textLength="112">Schedules/Quantities</text>
<text x="1665" y="765" textLength="56">Sheets (all)</text>
<text x="1669" y="783" textLength="170">000 - Temporary Schedule Sheet</text>
<text x="1669" y="801" textLength="99">101 - Substructure</text>
<text x="1669" y="819" textLength="109">102 - Superstructure</text>
<text x="1665" y="837" textLength="42">Families</text>
<text x="1665" y="855" textLength="38">Groups</text>
<text x="1665" y="873" textLength="56">Revit Links</text>
</g>

<!-- status bar -->
<rect y="1026" width="1920" height="24" fill="url(#st)"/>
<path d="M0 1026.500H1920" stroke="#8c8c8c"/>
<text x="3" y="1043" textLength="194">Click to enter component start point.</text>
<rect x="885" y="1029" width="24" height="19" fill="#c4c4c4"/>
<circle cx="894" cy="1035" r="2.500" fill="#999"/><circle cx="902" cy="1035" r="2.500" fill="#999"/><path d="M891 1046v-7h6v7zM899 1046v-7h6v7z" fill="#999"/>
<rect x="912" y="1030" width="206" height="17" fill="#fff"/>
<path d="M1106 1036l3.500 4 3.500-4" fill="none" stroke="#aaa"/>
<rect x="1121" y="1029" width="38" height="19" fill="#c4c4c4"/>
<path d="M1128 1034h9l-3 5-2 7h-3l2-8z" fill="#999"/><text x="1145" y="1043" fill="#222" textLength="10">:0</text>
<rect x="1178" y="1029" width="21" height="19" fill="#ccc"/><rect x="1184.500" y="1032.500" width="12" height="13" fill="#fff" stroke="#222"/><path d="M1186 1035h9M1186 1038h9M1186 1041h9M1186 1044h9" stroke="#333"/>
<rect x="1204" y="1029" width="22" height="19" fill="#c4c4c4"/><path d="M1210 1031h10v15h-10z" fill="#999"/>
<rect x="1231" y="1030" width="206" height="17" fill="#fff"/>
<text x="1234" y="1043" textLength="63" fill="#7f7f7f">Main Model</text>
<path d="M1425 1036l3.500 4 3.500-4" fill="none" stroke="#aaa"/>
<g fill="#cfcfcf"><rect x="1660" y="1029" width="22" height="19"/><rect x="1685" y="1029" width="22" height="19"/><rect x="1712" y="1029" width="22" height="19"/><rect x="1738" y="1029" width="22" height="19"/><rect x="1764" y="1029" width="22" height="19"/></g>
<g fill="#e8c230" stroke="#8a6a10"><circle cx="1668" cy="1034" r="3"/><circle cx="1674" cy="1034" r="3"/></g><use href="#cur" transform="translate(1669 1036) scale(.65)"/>
<path d="M1691 1044l6-11h6v4h-5l3 3h-5l5 4z" fill="#fff" stroke="#2a6db5" stroke-width="1.200"/>
<rect x="1719" y="1031" width="8" height="4" fill="#e87830" stroke="#843"/><rect x="1720" y="1035" width="6" height="4" fill="#f4c080" stroke="#843"/><use href="#cur" transform="translate(1725 1036) scale(.65)"/>
<path d="M1743 1036l6-3v12l-6-2z" fill="#a9cbec" stroke="#2a6db5"/><path d="M1750 1030l6 6M1756 1030l-6 6" stroke="#d22" stroke-width="1.500"/><use href="#cur" transform="translate(1753 1036) scale(.65)"/>
<path d="M1767 1034h6M1770 1031v6M1769 1040h5" stroke="#222"/><use href="#cur" transform="translate(1775 1034) scale(.7)"/>
<circle cx="1800" cy="1038" r="6" fill="none" stroke="#aaa" stroke-width="3"/>
<path d="M1815 1031h17l-6 8v8l-5-2v-6z" fill="#ddd" stroke="#333"/>
<text x="1834" y="1040" fill="#222" textLength="10">:0</text>
</svg>
</body></html>
